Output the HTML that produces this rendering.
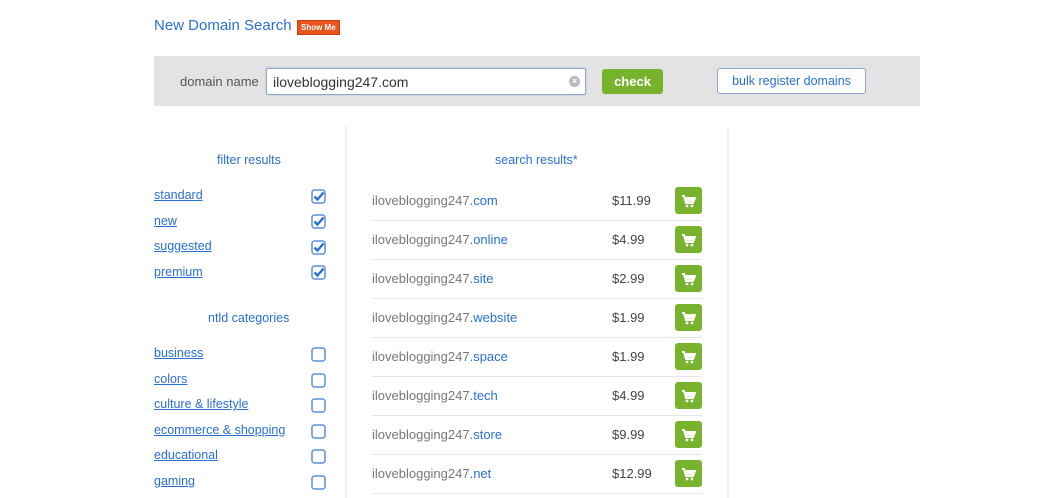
<!DOCTYPE html>
<html><head><meta charset="utf-8"><style>
*{margin:0;padding:0;box-sizing:border-box}
body{width:1050px;height:498px;overflow:hidden;background:#fff;font-family:"Liberation Sans",Arial,sans-serif;position:relative}
.a{position:absolute}
.title{left:154px;top:17px;font-size:15px;color:#2a6fd6;white-space:nowrap}
.show{left:297px;top:20px;background:#e8541c;color:#fff;font-size:8px;font-weight:bold;padding:2px 3px;border:1px solid #c9400f;line-height:9px}
.bar{left:154px;top:56px;width:766px;height:50px;background:#e3e3e3}
.lbl{left:180px;top:74px;font-size:13px;color:#555}
.inp{left:266px;top:68px;width:320px;height:27px;background:#fff;border:1px solid #8fa6c6;border-radius:2px;font-size:14px;color:#333;padding:5px 6px;box-shadow:0 0 2px #a9c0e0}
.clr{left:569px;top:76px;width:11px;height:11px;border-radius:50%;background:#bbb;color:#fff;font-size:9px;line-height:11px;text-align:center;font-weight:bold}
.chk{left:602px;top:69px;width:61px;height:25px;background:#78b32e;border-radius:3px;color:#fff;font-weight:bold;font-size:13px;text-align:center;line-height:25px}
.bulk{left:717px;top:68px;width:149px;height:26px;background:#fff;border:1px solid #8ea4d0;border-radius:3px;color:#2a6fd6;font-size:12.5px;text-align:center;line-height:24px}
.vl{width:2px;background:#f0f0f0;top:126px;height:372px}
.hd{font-size:12.5px;color:#2a6fd6}
.lk{left:154px;font-size:12.5px;color:#2a6fd6;text-decoration:underline}
.cb{left:311px;width:15px;height:15px}
.dn{left:372px;font-size:13px;color:#777}
.dn span{color:#2a6fd6}
.pr{left:612px;font-size:13px;color:#444}
.cart{left:675px;width:27px;height:27px;background:#78b32e;border-radius:3px}
.sep{left:372px;width:330px;height:1px;background:#e6e6e6}
</style></head><body>
<div class="a title">New Domain Search</div>
<div class="a show">Show Me</div>
<div class="a bar"></div>
<div class="a lbl">domain name</div>
<div class="a inp">iloveblogging247.com</div>
<div class="a clr">×</div>
<div class="a chk">check</div>
<div class="a bulk">bulk register domains</div>
<div class="a vl" style="left:345px"></div>
<div class="a vl" style="left:727px"></div>
<div class="a hd" style="left:217px;top:153px">filter results</div>
<div class="a hd" style="left:208px;top:311px">ntld categories</div>
<div class="a hd" style="left:495px;top:153px">search results*</div>

<div class="a lk" style="top:188px">standard</div>
<div class="a lk" style="top:214px">new</div>
<div class="a lk" style="top:239px">suggested</div>
<div class="a lk" style="top:265px">premium</div>
<svg class="a cb" style="top:189px" viewBox="0 0 15 15"><rect x="1" y="1" width="13" height="13" rx="2.5" fill="none" stroke="#5b8fdc" stroke-width="1.5"/><path d="M3.5 7.5l3 3 6-7" fill="none" stroke="#2a6fd6" stroke-width="2.4"/></svg>
<svg class="a cb" style="top:214px" viewBox="0 0 15 15"><rect x="1" y="1" width="13" height="13" rx="2.5" fill="none" stroke="#5b8fdc" stroke-width="1.5"/><path d="M3.5 7.5l3 3 6-7" fill="none" stroke="#2a6fd6" stroke-width="2.4"/></svg>
<svg class="a cb" style="top:240px" viewBox="0 0 15 15"><rect x="1" y="1" width="13" height="13" rx="2.5" fill="none" stroke="#5b8fdc" stroke-width="1.5"/><path d="M3.5 7.5l3 3 6-7" fill="none" stroke="#2a6fd6" stroke-width="2.4"/></svg>
<svg class="a cb" style="top:265px" viewBox="0 0 15 15"><rect x="1" y="1" width="13" height="13" rx="2.5" fill="none" stroke="#5b8fdc" stroke-width="1.5"/><path d="M3.5 7.5l3 3 6-7" fill="none" stroke="#2a6fd6" stroke-width="2.4"/></svg>

<div class="a lk" style="top:346px">business</div>
<div class="a lk" style="top:372px">colors</div>
<div class="a lk" style="top:397px">culture &amp; lifestyle</div>
<div class="a lk" style="top:423px">ecommerce &amp; shopping</div>
<div class="a lk" style="top:448px">educational</div>
<div class="a lk" style="top:474px">gaming</div>
<svg class="a cb" style="top:347px" viewBox="0 0 15 15"><rect x="1" y="1" width="13" height="13" rx="2.5" fill="none" stroke="#5b8fdc" stroke-width="1.5"/></svg>
<svg class="a cb" style="top:373px" viewBox="0 0 15 15"><rect x="1" y="1" width="13" height="13" rx="2.5" fill="none" stroke="#5b8fdc" stroke-width="1.5"/></svg>
<svg class="a cb" style="top:398px" viewBox="0 0 15 15"><rect x="1" y="1" width="13" height="13" rx="2.5" fill="none" stroke="#5b8fdc" stroke-width="1.5"/></svg>
<svg class="a cb" style="top:424px" viewBox="0 0 15 15"><rect x="1" y="1" width="13" height="13" rx="2.5" fill="none" stroke="#5b8fdc" stroke-width="1.5"/></svg>
<svg class="a cb" style="top:449px" viewBox="0 0 15 15"><rect x="1" y="1" width="13" height="13" rx="2.5" fill="none" stroke="#5b8fdc" stroke-width="1.5"/></svg>
<svg class="a cb" style="top:475px" viewBox="0 0 15 15"><rect x="1" y="1" width="13" height="13" rx="2.5" fill="none" stroke="#5b8fdc" stroke-width="1.5"/></svg>

<div class="a dn" style="top:193px">iloveblogging247<span>.com</span></div><div class="a pr" style="top:193px">$11.99</div>
<div class="a dn" style="top:232px">iloveblogging247<span>.online</span></div><div class="a pr" style="top:232px">$4.99</div>
<div class="a dn" style="top:271px">iloveblogging247<span>.site</span></div><div class="a pr" style="top:271px">$2.99</div>
<div class="a dn" style="top:310px">iloveblogging247<span>.website</span></div><div class="a pr" style="top:310px">$1.99</div>
<div class="a dn" style="top:349px">iloveblogging247<span>.space</span></div><div class="a pr" style="top:349px">$1.99</div>
<div class="a dn" style="top:388px">iloveblogging247<span>.tech</span></div><div class="a pr" style="top:388px">$4.99</div>
<div class="a dn" style="top:427px">iloveblogging247<span>.store</span></div><div class="a pr" style="top:427px">$9.99</div>
<div class="a dn" style="top:466px">iloveblogging247<span>.net</span></div><div class="a pr" style="top:466px">$12.99</div>

<div class="a sep" style="top:220px"></div>
<div class="a sep" style="top:259px"></div>
<div class="a sep" style="top:298px"></div>
<div class="a sep" style="top:337px"></div>
<div class="a sep" style="top:376px"></div>
<div class="a sep" style="top:415px"></div>
<div class="a sep" style="top:454px"></div>
<div class="a sep" style="top:493px"></div>

<svg width="0" height="0" style="position:absolute"><defs><g id="ct"><path d="M7 9h2l2 7h7l2-5h-10" fill="none" stroke="#fff" stroke-width="2"/><circle cx="12" cy="19" r="1.4" fill="#fff"/><circle cx="17" cy="19" r="1.4" fill="#fff"/><path d="M10.5 11.5h8.5l-1.3 3.3h-6.3z" fill="#fff"/></g></defs></svg>
<svg class="a cart" style="top:187px" viewBox="0 0 27 27"><use href="#ct"/></svg>
<svg class="a cart" style="top:226px" viewBox="0 0 27 27"><use href="#ct"/></svg>
<svg class="a cart" style="top:265px" viewBox="0 0 27 27"><use href="#ct"/></svg>
<svg class="a cart" style="top:304px" viewBox="0 0 27 27"><use href="#ct"/></svg>
<svg class="a cart" style="top:343px" viewBox="0 0 27 27"><use href="#ct"/></svg>
<svg class="a cart" style="top:382px" viewBox="0 0 27 27"><use href="#ct"/></svg>
<svg class="a cart" style="top:421px" viewBox="0 0 27 27"><use href="#ct"/></svg>
<svg class="a cart" style="top:460px" viewBox="0 0 27 27"><use href="#ct"/></svg>
</body></html>
